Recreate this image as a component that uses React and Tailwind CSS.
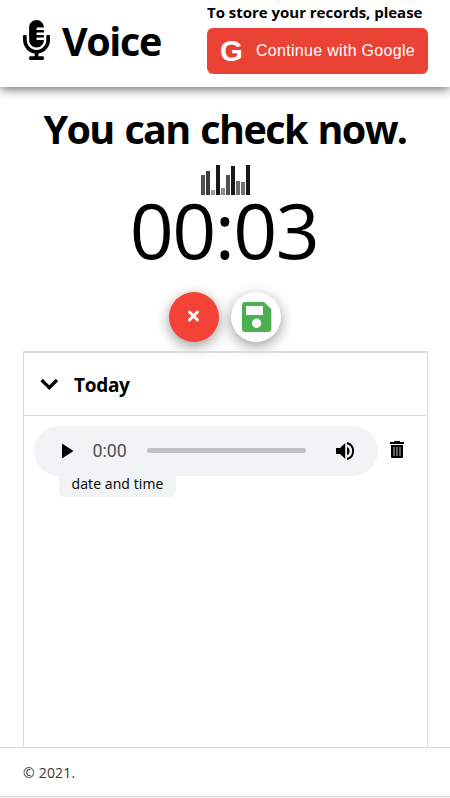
import React from 'react';

const bars = [
  'h-[20px] bg-[#525252]',
  'h-[24px] bg-[#3c3c3c]',
  'h-[5px] bg-[#999999]',
  'h-[30px] bg-[#181818]',
  'h-[7px] bg-[#909090]',
  'h-[20px] bg-[#505050]',
  'h-[29px] bg-[#1a1a1a]',
  'h-[14px] bg-[#6c6c6c]',
  'h-[13px] bg-[#707070]',
  'h-[30px] bg-[#181818]',
];

function Mic() {
  return (
    <svg className="h-10 w-[27px] shrink-0" viewBox="0 0 352 512" preserveAspectRatio="none" fill="currentColor">
      <path d="M336 192h-16c-8.84 0-16 7.16-16 16v48c0 74.8-64.49 134.82-140.79 127.38C96.71 376.89 48 317.11 48 250.3V208c0-8.84-7.16-16-16-16H16c-8.84 0-16 7.16-16 16v40.16c0 89.64 63.97 169.55 152 181.69V464H96c-8.84 0-16 7.16-16 16v16c0 8.84 7.16 16 16 16h160c8.84 0 16-7.16 16-16v-16c0-8.84-7.16-16-16-16h-56v-33.77C285.71 418.47 352 344.9 352 256v-48c0-8.84-7.16-16-16-16zM176 352c53.02 0 96-42.98 96-96h-85.33c-5.89 0-10.67-3.58-10.67-8v-16c0-4.42 4.78-8 10.67-8H272v-32h-85.33c-5.89 0-10.67-3.58-10.67-8v-16c0-4.42 4.78-8 10.67-8H272v-32h-85.33c-5.89 0-10.67-3.58-10.67-8v-16c0-4.42 4.78-8 10.67-8H272c0-53.02-42.98-96-96-96S80 42.98 80 96v160c0 53.02 42.98 96 96 96z" />
    </svg>
  );
}

function Header() {
  return (
    <header className="flex h-[87px] shrink-0 justify-between bg-white pr-[22px] pl-[23px] shadow-[0_2px_10px_rgba(0,0,0,0.6)]">
      <div className="flex h-[80px] items-center">
        <Mic />
        <h1 className="ml-[12px] pt-[2px] text-[39.5px] leading-[80px] font-bold tracking-[-1.4px]">Voice</h1>
      </div>
      <div className="w-[221px]">
        <p className="h-[28px] text-[15px] leading-[25px] font-bold tracking-[-0.02px] whitespace-nowrap">
          To store your records, please
        </p>
        <button className="flex h-[46px] w-full items-center rounded-[6px] bg-[#ea4335] pl-[13px] font-['Liberation_Sans',sans-serif] text-white">
          <span className="w-[36px] text-left text-[29.5px] leading-[44px] font-bold">G</span>
          <span className="text-[16px] tracking-[0.3px] whitespace-nowrap">Continue with Google</span>
        </button>
      </div>
    </header>
  );
}

function Player() {
  return (
    <div className="flex h-[50px] w-[344px] items-center rounded-full bg-[#f1f3f4]">
      <svg className="ml-[27px] h-4 w-[13px]" viewBox="0 0 13 16">
        <path d="M1 .5v15l11.5-7.5z" />
      </svg>
      <span className="ml-[18.5px] w-[54.5px] font-[Roboto,sans-serif] text-[17.8px] leading-[48px] text-[#505050]">0:00</span>
      <div className="mb-px h-[5px] w-[159px] rounded-full bg-[#c1c2c3]" />
      <svg className="mb-px ml-[30px] h-5 w-5" viewBox="0 0 20 20">
        <path d="M0 7v6h4l5.2 5V2L4 7z" />
        <path d="M11 5.8v8.4a4.6 4.6 0 0 0 0-8.4z" />
        <path d="M11 2a8.3 8.3 0 0 1 0 16" fill="none" stroke="#000" strokeWidth="2" />
      </svg>
    </div>
  );
}

export default function App() {
  return (
    <div className="flex h-[798px] w-[450px] flex-col overflow-hidden bg-white font-['Open_Sans','Noto_Sans',sans-serif] text-black">
      <Header />
      <main className="flex flex-1 flex-col px-[22px]">
        <h2 className="h-[78px] text-center text-[39.5px] leading-[85px] font-bold tracking-[-1.6px] [word-spacing:2px] whitespace-nowrap">
          You can check now.
        </h2>
        <div className="flex h-[30px] items-end justify-center gap-px">
          {bars.map((bar, i) => (
            <div key={i} className={`w-1 ${bar}`} />
          ))}
        </div>
        <div className="h-[97px] pr-[2px] text-center text-[77px] leading-[69px] tracking-[-1.6px]">00:03</div>
        <div className="flex h-[59px] justify-center gap-3">
          <button className="flex h-[50px] w-[50px] items-center justify-center rounded-full bg-[#f44336] shadow-[0_4px_14px_rgba(0,0,0,0.4)]">
            <svg className="h-[50px] w-[50px]" viewBox="0 0 50 50">
              <path d="m20.5 20 8 8m0-8-8 8" stroke="#fff" strokeWidth="3" strokeLinecap="round" />
            </svg>
          </button>
          <button className="flex h-[50px] w-[50px] items-center justify-center rounded-full bg-white shadow-[0_4px_14px_rgba(0,0,0,0.4)]">
            <svg className="h-[50px] w-[50px]" viewBox="0 0 50 50">
              <path
                d="M13.5 10H33l7.3 7.3v19.4a3.3 3.3 0 0 1-3.3 3.3H14.3a3.3 3.3 0 0 1-3.3-3.3V13.3a3.3 3.3 0 0 1 3.3-3.3zM15 14v9h17v-9zM25.6 26.5a4.7 4.7 0 1 0 0 9.4 4.7 4.7 0 0 0 0-9.4z"
                fill="#4caf50"
                fillRule="evenodd"
              />
            </svg>
          </button>
        </div>
        <section className="ml-px flex-1 border-x border-t-2 border-[#dcdcdc]">
          <div className="mr-px flex h-[63px] items-center border-b border-[#dcdcdc] pl-[16px]">
            <svg className="h-3 w-[19px]" viewBox="0 0 19 12">
              <path d="m1.6 2 7.7 7.7L17 2" fill="none" stroke="#000" strokeWidth="3.2" />
            </svg>
            <h3 className="ml-[15px] pt-[2px] text-[19px] leading-[60px] font-bold tracking-[-0.3px]">Today</h3>
          </div>
          <div className="flex items-center pt-[10px] pl-[10px]">
            <Player />
            <svg className="mt-[-4px] ml-[12px] h-[18px] w-[14px]" viewBox="0 0 14 18">
              <path d="M0 2h4V1h6v1h4v2H0zM1 5h12v12q0 1-1 1H2q-1 0-1-1z" />
              <path d="M4 7v9M7 7v9M10 7v9" stroke="#777" strokeWidth="1.6" />
            </svg>
          </div>
          <div className="ml-[35px] h-[21px] w-[117px] rounded-b-[5px] bg-[#f1f3f4] text-center text-[14px] leading-[16px] tracking-[0.08px] whitespace-nowrap">
            date and time
          </div>
        </section>
      </main>
      <footer className="h-[50px] shrink-0 border-y border-[#dcdcdc] pl-[23px] text-[14px] leading-[50px] tracking-[0.2px] text-[#333]">
        © 2021.
      </footer>
      <div className="h-px shrink-0 bg-[#f0f0f0]" />
    </div>
  );
}
